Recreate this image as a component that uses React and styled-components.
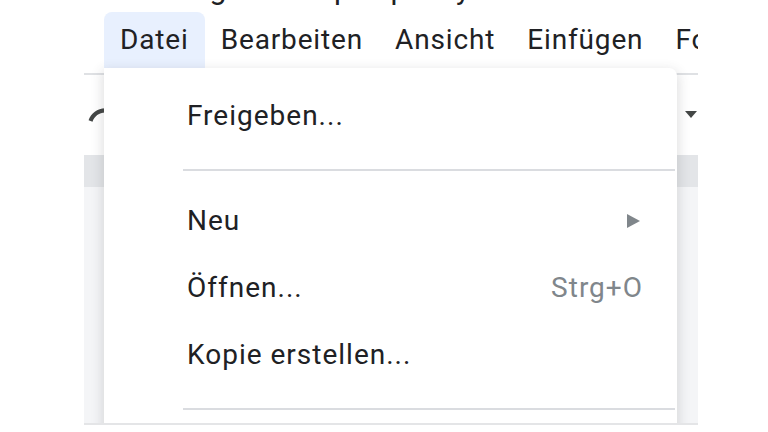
import React from 'react';
import styled, { createGlobalStyle } from 'styled-components';

const Global = createGlobalStyle`
  html, body { margin: 0; padding: 0; background: #ffffff; }
  body {
    font-family: Roboto, "Noto Sans", Arial, sans-serif;
    width: 768px;
    height: 432px;
    overflow: hidden;
  }
`;

const Stage = styled.div`
  width: 768px;
  height: 432px;
  box-sizing: border-box;
  padding-left: 84px;
`;

const Window = styled.div`
  position: relative;
  width: 614px;
  height: 423px;
  overflow: hidden;
  border-bottom: 2px solid #e4e5e7;
  display: flex;
  flex-direction: column;
  background: #ffffff;
`;

const TitleRow = styled.div`
  flex: none;
  height: 12px;
  display: flex;
  align-items: flex-end;
  padding-left: 56px;
  overflow: hidden;
`;

const Title = styled.div`
  font-size: 30px;
  line-height: 30px;
  margin-bottom: 8px;
  color: #202124;
  white-space: nowrap;
`;

const MenuBar = styled.div`
  flex: none;
  height: 56px;
  display: flex;
  padding-left: 20px;
`;

const MenuTab = styled.div`
  padding: 0 16px;
  line-height: 56px;
  font-size: 28px;
  letter-spacing: 0.85px;
  color: #202124;
  white-space: nowrap;
  border-radius: 8px 8px 0 0;
  background: ${(p) => (p.$active ? '#e8f0fe' : 'transparent')};
`;

const Toolbar = styled.div`
  flex: none;
  margin-top: 5px;
  height: 80px;
  border-top: 2px solid #dfe1e4;
  display: flex;
  align-items: center;
  justify-content: space-between;
  padding: 0 1px 0 2px;
`;

const Ruler = styled.div`
  flex: none;
  height: 32px;
  background: #e3e5e8;
`;

const DocArea = styled.div`
  flex: 1;
  background: #f4f5f7;
`;

const Dropdown = styled.div`
  position: absolute;
  top: 68px;
  left: 20px;
  width: 573px;
  height: 420px;
  padding-top: 14px;
  box-sizing: border-box;
  background: #ffffff;
  border-radius: 0 8px 0 0;
  box-shadow: 0 4px 12px 2px rgba(60, 64, 67, 0.16);
`;

const Item = styled.div`
  height: 67px;
  display: flex;
  align-items: center;
  justify-content: space-between;
  padding: 0 34px 0 83px;
  font-size: 28px;
  letter-spacing: 1px;
  color: #202124;
  white-space: nowrap;
`;

const Shortcut = styled.span`
  color: #80868b;
`;

const Separator = styled.div`
  height: 2px;
  background: #dadce0;
  margin: 20px 2px 16px 79px;
`;

const SubArrow = styled.svg`
  margin-right: 3px;
  display: block;
`;

const RedoIcon = () => (
  <svg width="40" height="40" viewBox="0 0 24 24">
    <path
      fill="#444746"
      d="M18.4 10.6C16.55 8.99 14.15 8 11.5 8c-4.65 0-8.58 3.03-9.960 7.22L3.9 16c1.05-3.19 4.05-5.5 7.6-5.5 1.95 0 3.730.72 5.12 1.88L13 16h9V7l-3.6 3.6z"
    />
  </svg>
);

const Caret = () => (
  <svg width="12" height="8" viewBox="0 0 12 8">
    <polygon points="0,0 12,0 6,7" fill="#444746" />
  </svg>
);

const menus = ['Datei', 'Bearbeiten', 'Ansicht', 'Einfügen', 'Format'];

export default function App() {
  return (
    <>
      <Global />
      <Stage>
        <Window>
          <TitleRow>
            <Title>Übung Titel Kap. 1 pro Lyrik</Title>
          </TitleRow>
          <MenuBar>
            {menus.map((m, i) => (
              <MenuTab key={m} $active={i === 0}>{m}</MenuTab>
            ))}
          </MenuBar>
          <Toolbar>
            <RedoIcon />
            <Caret />
          </Toolbar>
          <Ruler />
          <DocArea />
          <Dropdown>
            <Item>Freigeben...</Item>
            <Separator />
            <Item>
              <span>Neu</span>
              <SubArrow width="13" height="14" viewBox="0 0 13 14">
                <polygon points="0,0 13,7 0,14" fill="#80868b" />
              </SubArrow>
            </Item>
            <Item>
              <span>Öffnen...</span>
              <Shortcut>Strg+O</Shortcut>
            </Item>
            <Item>Kopie erstellen...</Item>
            <Separator />
          </Dropdown>
        </Window>
      </Stage>
    </>
  );
}
